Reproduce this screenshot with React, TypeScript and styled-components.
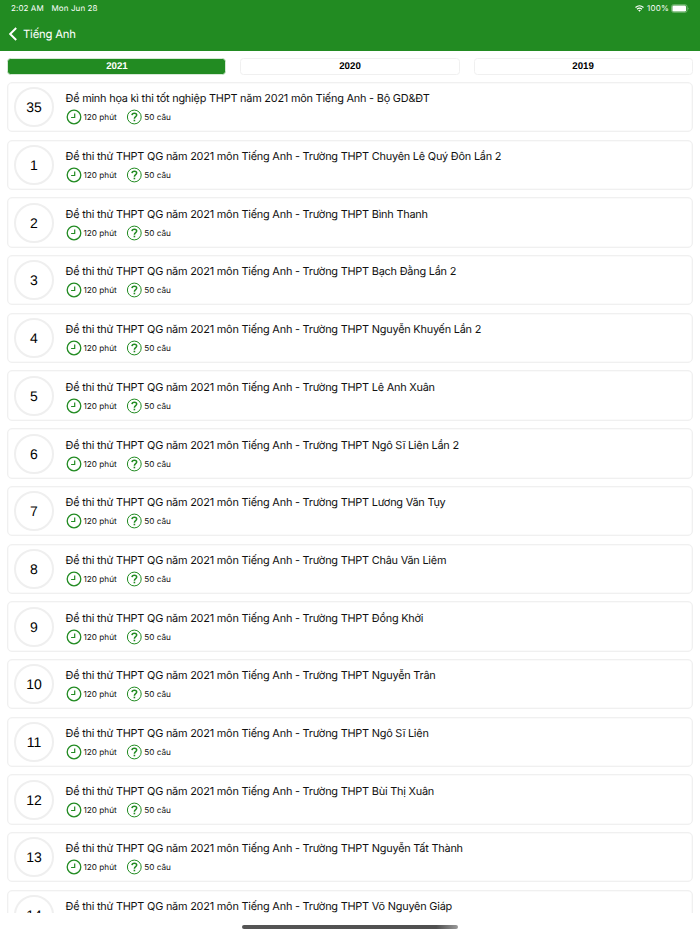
import React from "react";
import styled, { createGlobalStyle } from "styled-components";

const GREEN = "#228b22";
const LINE = "#f0f0f0";

const GlobalStyle = createGlobalStyle`
  * { box-sizing: border-box; }
  body {
    margin: 0;
    background: #fff;
    font-family: Inter, "Liberation Sans", sans-serif;
    text-rendering: geometricPrecision;
    color: #111;
  }
`;

const Screen = styled.div`
  display: flex;
  flex-direction: column;
  height: 934px;
  overflow: hidden;
  background: #fff;
`;

const Header = styled.header`
  flex: none;
  height: 51px;
  background: ${GREEN};
  color: #fff;
`;

const StatusBar = styled.div`
  display: flex;
  align-items: center;
  height: 17px;
  padding: 0 11px 0 11px;
  font-size: 8px;
  line-height: 17px;
  white-space: nowrap;
`;

const StatusText = styled.span<{ $width: number; $gap?: number; $spacing?: number }>`
  width: ${(p) => p.$width}px;
  margin-right: ${(p) => p.$gap ?? 0}px;
  letter-spacing: ${(p) => p.$spacing ?? 0}px;
`;

const StatusRight = styled.div`
  display: flex;
  align-items: center;
  margin-left: auto;
`;

const WifiIcon = styled.svg`
  width: 9px;
  height: 7px;
  margin-right: 3.5px;
`;

const BatteryIcon = styled.svg`
  width: 18px;
  height: 9px;
`;

const NavBar = styled.nav`
  display: flex;
  align-items: center;
  height: 34px;
  padding-left: 8.5px;
`;

const BackIcon = styled.svg`
  width: 9px;
  height: 14px;
`;

const NavTitle = styled.h1`
  margin: 0 0 0 5.5px;
  font-size: 11.3px;
  font-weight: 400;
  line-height: 16px;
  letter-spacing: -0.2px;
`;

const Tabs = styled.div`
  flex: none;
  display: flex;
  gap: 14px;
  height: 31px;
  padding: 7px 7.4px 7px 7.4px;
`;

const Tab = styled.button<{ $active?: boolean }>`
  flex: 1;
  height: 17px;
  padding: 0;
  border: 1px solid ${(p) => (p.$active ? "#d5e9d5" : LINE)};
  border-radius: 3.5px;
  background: ${(p) => (p.$active ? GREEN : "#fff")};
  color: ${(p) => (p.$active ? "#fff" : "#000")};
  font: bold 9.7px/15px "Liberation Sans", Arial, sans-serif;
  text-rendering: geometricPrecision;
`;

const List = styled.main`
  flex: none;
  display: flex;
  flex-direction: column;
  gap: 7.3px;
  height: 831px;
  overflow: hidden;
  padding: 0 7px;
`;

const Card = styled.article`
  flex: none;
  display: flex;
  align-items: flex-start;
  height: 50.4px;
  padding: 4.4px 6px 0;
  border: 1px solid ${LINE};
  box-shadow: inset 0 0 0 0.5px #f5f5f5;
  border-radius: 5px;
`;

const NumberBadge = styled.div`
  flex: none;
  display: flex;
  align-items: center;
  justify-content: center;
  width: 40px;
  height: 40px;
  border: 2.4px solid #efefef;
  border-radius: 50%;
  color: #000;
  font: 14px/16px "Liberation Sans", Arial, sans-serif;
`;

const Details = styled.div`
  padding: 3px 0 0 11.5px;
`;

const Title = styled.h2`
  margin: 0;
  font-size: 10.9px;
  font-weight: 400;
  line-height: 16px;
  letter-spacing: -0.215px;
  white-space: nowrap;
`;

const Meta = styled.div`
  display: flex;
  align-items: center;
  height: 16px;
  margin-top: 3px;
  font-size: 8.2px;
  white-space: nowrap;
`;

const MetaItem = styled.div<{ $width: number }>`
  display: flex;
  align-items: center;
  gap: 2px;
  width: ${(p) => p.$width}px;
`;

const MetaIcon = styled.svg`
  flex: none;
  width: 16px;
  height: 16px;
`;

const HomeArea = styled.footer`
  display: flex;
  justify-content: center;
  height: 21px;
  padding-top: 11.5px;
`;

const HomeIndicator = styled.div`
  width: 216px;
  height: 4px;
  border-radius: 2px;
  background: linear-gradient(90deg, #555 0%, #505050 90%, #999 100%);
`;

const prefix = "Đề thi thử THPT QG năm 2021 môn Tiếng Anh - Trường THPT ";

const exams: { no: string; title: string }[] = [
  { no: "35", title: "Đề minh họa kì thi tốt nghiệp THPT năm 2021 môn Tiếng Anh - Bộ GD&ĐT" },
  ...[
    "Chuyên Lê Quý Đôn Lần 2",
    "Bình Thanh",
    "Bạch Đằng Lần 2",
    "Nguyễn Khuyến Lần 2",
    "Lê Anh Xuân",
    "Ngô Sĩ Liên Lần 2",
    "Lương Văn Tụy",
    "Châu Văn Liêm",
    "Đồng Khởi",
    "Nguyễn Trân",
    "Ngô Sĩ Liên",
    "Bùi Thị Xuân",
    "Nguyễn Tất Thành",
    "Võ Nguyên Giáp",
  ].map((school, i) => ({ no: String(i + 1), title: prefix + school })),
];

function ClockIcon() {
  return (
    <MetaIcon viewBox="0 0 16 16" fill="none" stroke={GREEN}>
      <circle cx="8" cy="8" r="6.8" strokeWidth="1.3" />
      <path d="M8.7 4.4V8.5H5.1" strokeWidth="1.2" />
    </MetaIcon>
  );
}

function QuestionIcon() {
  return (
    <MetaIcon viewBox="0 0 16 16" fill="none" stroke={GREEN}>
      <circle cx="8.3" cy="8" r="6.9" strokeWidth="1" />
      <path d="M6 6.1C6.1 3.6 10.7 3.6 10.7 6.1C10.7 7.7 8.4 7.7 8.4 9.8" strokeWidth="1.5" />
      <path d="M8.4 10.7V12.3" strokeWidth="1.6" />
    </MetaIcon>
  );
}

export default function App() {
  return (
    <>
      <GlobalStyle />
      <Screen>
        <Header>
          <StatusBar>
            <StatusText $width={33} $gap={7.5} $spacing={0.1}>2:02 AM</StatusText>
            <StatusText $width={50} $spacing={0.1}>Mon Jun 28</StatusText>
            <StatusRight>
              <WifiIcon viewBox="0 0 9 7" fill="none" stroke="#fff" strokeWidth="1.2">
                <path d="M0.5 2.5Q4.5-1 8.5 2.5M2 4.2Q4.5 2 7 4.2" />
                <path d="M3.1 5.3Q4.5 4.2 5.9 5.3L4.5 6.8Z" fill="#fff" stroke="none" />
              </WifiIcon>
              <StatusText $width={22} $gap={2} $spacing={0.2}>100%</StatusText>
              <BatteryIcon viewBox="0 0 18 9">
                <rect x="0.5" y="0.7" width="15.6" height="7.6" rx="2" fill="none" stroke="#8fc58f" strokeWidth="0.7" />
                <rect x="1.4" y="1.6" width="13.6" height="5.8" rx="1.2" fill="#fff" />
                <path d="M16.8 3.2Q18.2 4.5 16.8 5.8Z" fill="#8fc58f" />
              </BatteryIcon>
            </StatusRight>
          </StatusBar>
          <NavBar>
            <BackIcon viewBox="0 0 9 14" fill="none" stroke="#fff" strokeWidth="1.9">
              <path d="M7.2 1L1.2 7L7.2 13" />
            </BackIcon>
            <NavTitle>Tiếng Anh</NavTitle>
          </NavBar>
        </Header>
        <Tabs>
          <Tab $active>2021</Tab>
          <Tab>2020</Tab>
          <Tab>2019</Tab>
        </Tabs>
        <List>
          {exams.map((exam) => (
            <Card key={exam.no}>
              <NumberBadge>{exam.no}</NumberBadge>
              <Details>
                <Title>{exam.title}</Title>
                <Meta>
                  <MetaItem $width={60.7}>
                    <ClockIcon />
                    120 phút
                  </MetaItem>
                  <MetaItem $width={50}>
                    <QuestionIcon />
                    50 câu
                  </MetaItem>
                </Meta>
              </Details>
            </Card>
          ))}
        </List>
        <HomeArea>
          <HomeIndicator />
        </HomeArea>
      </Screen>
    </>
  );
}
